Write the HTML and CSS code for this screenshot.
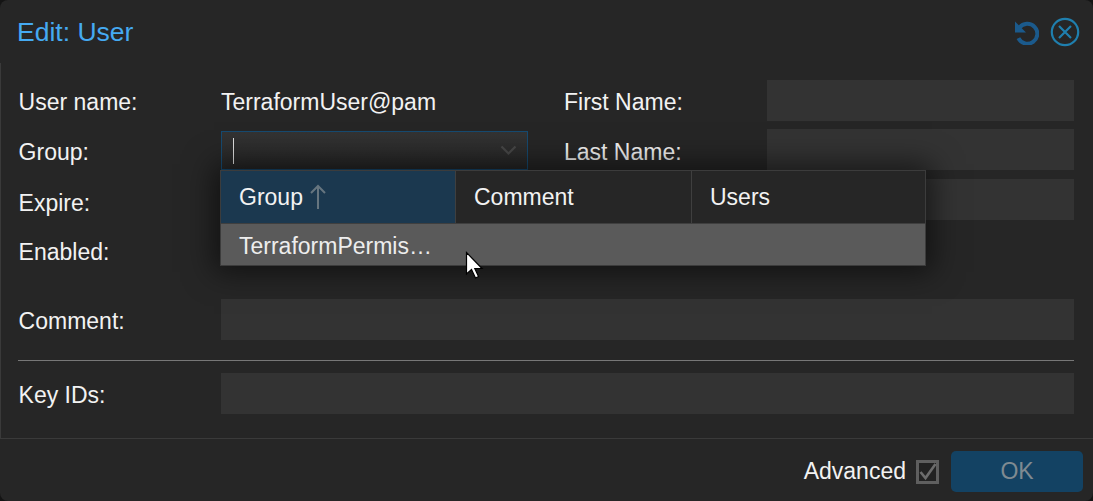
FILE: index.html
```html
<!DOCTYPE html>
<html lang="en">
<head>
<meta charset="utf-8">
<title>Edit: User</title>
<link rel="stylesheet" href="styles.css">
</head>
<body>
<div class="dialog">
  <header class="head">
    <h1 class="title">Edit: User</h1>
    <div class="tools">
      <svg class="tool" width="26" height="26" viewBox="0 0 26 26"><path d="M6.4 8.6A10 10 0 1 1 5.400 19.200" fill="none" stroke="#1b5a8c" stroke-width="4"/><path d="M2 2.500V13.500H13Z" fill="#1b5a8c"/></svg>
      <svg class="tool" width="30" height="30" viewBox="0 0 30 30"><circle cx="15" cy="15" r="13.200" fill="none" stroke="#1f7fae" stroke-width="2.200"/><path d="M9 9L21 21M21 9L9 21" stroke="#1f7fae" stroke-width="2.200" fill="none"/></svg>
    </div>
  </header>
  <main class="body">
    <div class="columns">
      <div class="col">
        <div class="row"><span class="label">User name:</span><span class="value">TerraformUser@pam</span></div>
        <div class="row"><span class="label low1">Group:</span>
          <div class="field combo"><span class="caret"></span>
            <svg class="chevron" width="18" height="11" viewBox="0 0 18 11"><path d="M3.500 1.500L10.500 8.500L17.500 1.500" fill="none" stroke="#484848" stroke-width="2.200"/></svg>
          </div>
        </div>
        <div class="row"><span class="label low2">Expire:</span></div>
        <div class="row enabled"><span class="label low2">Enabled:</span></div>
      </div>
      <div class="col right">
        <div class="row"><span class="label">First Name:</span><div class="field"></div></div>
        <div class="row"><span class="label low1">Last Name:</span><div class="field"></div></div>
        <div class="row"><span class="label"></span><div class="field"></div></div>
      </div>
    </div>
    <div class="row wide comment"><span class="label">Comment:</span><div class="field"></div></div>
    <hr class="rule">
    <div class="row wide"><span class="label">Key IDs:</span><div class="field"></div></div>
  </main>
  <footer class="foot">
    <span class="adv">Advanced</span>
    <svg class="check" width="23" height="24" viewBox="0 0 23 24"><rect x="1.500" y="1.500" width="20" height="21" fill="#222" stroke="#5f5f5f" stroke-width="3"/><path d="M4.500 12L9.500 18L19.500 4" fill="none" stroke="#6c6c6c" stroke-width="2.600"/></svg>
    <button class="ok" type="button">OK</button>
  </footer>
  <div class="picker">
    <div class="thead">
      <div class="th sorted">Group <svg class="sort" width="18" height="26" viewBox="0 0 18 26"><path d="M9 25V2M2 9L9 2L16 9" fill="none" stroke="#66757f" stroke-width="2"/></svg></div>
      <div class="th mid">Comment</div>
      <div class="th last">Users</div>
    </div>
    <div class="tr">TerraformPermis…</div>
  </div>
  <svg class="pointer" width="20" height="30" viewBox="0 0 20 30"><path d="M1.5 1.5V23L6.5 18.5L10.5 27L13.5 25.500L9.800 17.500H17Z" fill="#fff" stroke="#000" stroke-width="1.200"/></svg>
</div>
</body>
</html>
```
FILE: styles.css
```css
* { box-sizing: border-box; }
html, body { margin: 0; height: 100%; background: #141414; overflow: hidden; }
body { font-family: "Liberation Sans", Arial, sans-serif; font-size: 23px; color: #f2f2f2; }
.dialog { position: relative; width: 1093px; height: 501px; background: #262626; border-radius: 8px; display: flex; flex-direction: column; overflow: hidden; }
.head { height: 63px; flex: none; display: flex; align-items: center; justify-content: space-between; padding: 0 13px 0 17px; }
.title { margin: 0; padding-top: 2px; font-size: 26.500px; font-weight: 400; color: #45aaf2; }
.tools { display: flex; align-items: center; gap: 11px; }
.tool { display: block; }
.body { flex: 1; border: 1px solid #3a3a3a; border-width: 0 0 1px 1px; padding: 16.900px 19px 0 17.600px; }
.columns { display: flex; margin-bottom: 30px; }
.col { width: 509.400px; }
.col.right { margin-left: 36px; width: 510px; }
.right .row .label { width: 203px; }
.row { display: flex; align-items: center; height: 41px; margin-bottom: 8.500px; }
.label { width: 202.400px; flex: none; padding-top: 4px; }
.low1 { padding-top: 6px; }
.low2 { padding-top: 8px; }
.value { flex: 1; padding-top: 4px; }
.field { flex: 1; height: 41px; background: #333; }
.combo { background: linear-gradient(#333, #262626); border: 1px solid #164a70; display: flex; align-items: center; justify-content: space-between; padding: 0 11px; flex: none; width: 307px; height: 39px; margin-top: 2px; }
.caret { width: 1px; height: 26px; background: #ddd; }
.chevron { display: block; }
.enabled { margin-bottom: 0; }
.row.wide { margin-bottom: 0; }
.rule { height: 1px; border: 0; margin: 20px 0 12px -0.600px; background: #777; }
.foot { height: 62px; flex: none; display: flex; align-items: center; justify-content: flex-end; padding: 3px 10px 0 0; }
.adv { margin-right: 10px; }
.check { margin-right: 12px; display: block; }
.ok { width: 132px; height: 41px; border: 0; border-radius: 5px; background: #134263; color: #7f8a91; font: inherit; }
.picker { position: absolute; left: 220px; top: 170px; width: 706px; height: 96px; background: #5a5a5a; border: 1px solid #3c3c3c; box-shadow: 0 0 28px 6px rgba(0,0,0,.55); }
.thead { display: flex; height: 53px; background: #262626; border-bottom: 1px solid #3f3f3f; }
.th { width: 235px; padding-left: 18px; display: flex; align-items: center; gap: 6px; border-right: 1px solid #3f3f3f; }
.mid { width: 236px; }
.last { flex: 1; border-right: 0; }
.sorted { background: #1b384f; }
.sort { display: block; }
.tr { height: 41px; line-height: 45px; padding-left: 18px; color: #ededed; }
.pointer { position: absolute; left: 465px; top: 251px; }
```
